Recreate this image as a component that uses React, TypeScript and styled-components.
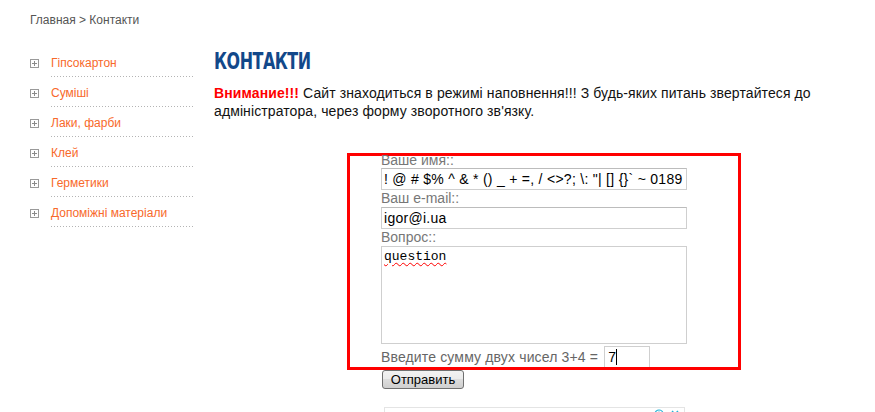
import styled, { createGlobalStyle } from "styled-components";

const GlobalStyle = createGlobalStyle`
  body {
    margin: 0;
    background: #fff;
    font-family: "Liberation Sans", Arial, sans-serif;
  }
`;

const Page = styled.div`
  padding: 13px 0 0 30px;
  width: 845px;
  height: 399px;
  overflow: hidden;
`;

const Breadcrumb = styled.div`
  font-size: 12px;
  line-height: 14px;
  color: #555;
  height: 31px;
`;

const Layout = styled.div`
  display: grid;
  grid-template-columns: 164px 640px;
  column-gap: 20px;
`;

const Sidebar = styled.ul`
  list-style: none;
  margin: 0;
  padding: 3px 0 0;
`;

const MenuItem = styled.li`
  display: flex;
  align-items: flex-start;
`;

const PlusIcon = styled.span`
  position: relative;
  flex: none;
  width: 7px;
  height: 7px;
  margin: 12px 12px 0 0;
  border: 1px solid #9a9a9a;

  &::before,
  &::after {
    content: "";
    position: absolute;
    background: #8a8a8a;
  }
  &::before {
    left: 1px;
    right: 1px;
    top: 3px;
    height: 1px;
  }
  &::after {
    top: 1px;
    bottom: 1px;
    left: 3px;
    width: 1px;
  }
`;

const MenuLink = styled.a`
  flex: 1;
  display: block;
  padding: 9px 0 7px;
  font-size: 12px;
  line-height: 14px;
  color: #f8692a;
  text-decoration: none;
  background: linear-gradient(to right, #b4b4b4 1px, transparent 1px) repeat-x left bottom / 3px 1px;
`;

const Main = styled.div`
  padding-top: 2px;
`;

// condensed heading: the original face is narrower than any installed one
const Heading = styled.h1`
  margin: 0;
  display: inline-block;
  font-family: "DejaVu Sans Condensed", "DejaVu Sans", sans-serif;
  font-size: 23px;
  line-height: 30px;
  font-weight: bold;
  color: #12488a;
  letter-spacing: -0.6px;
  transform: scaleX(0.77);
  transform-origin: left center;
`;

const Notice = styled.p`
  margin: 8px 0 0;
  font-size: 14px;
  line-height: 18px;
  letter-spacing: 0.1px;
  color: #111;

  strong {
    color: #f00;
  }
`;

const FormFrame = styled.form`
  margin: 33px 0 0 133px;
  width: 357px;
  height: 211px;
  padding: 0 0 0 31px;
  border: 3px solid #f00;
  display: flex;
  flex-direction: column;
`;

const Label = styled.label<{ $first?: boolean }>`
  display: block;
  font-size: 14px;
  line-height: ${({ $first }) => ($first ? "15px" : "17px")};
  margin-top: ${({ $first }) => ($first ? "-3px" : "0")};
  color: #777;
`;

const TextInput = styled.input`
  box-sizing: border-box;
  width: 306px;
  height: 22px;
  margin: 0;
  padding: 1px 2px;
  border: 1px solid #cfcfcf;
  border-top-color: #bcbcbc;
  font-family: "Liberation Sans", Arial, sans-serif;
  font-size: 14px;
  letter-spacing: 0.28px;
  color: #000;
  outline: none;
`;

const TextArea = styled.div`
  box-sizing: border-box;
  width: 306px;
  height: 98px;
  padding: 2px 2px;
  border: 1px solid #cfcfcf;
  font-family: "Liberation Mono", "Courier New", monospace;
  font-size: 13px;
  line-height: 15px;
  color: #000;

  span {
    text-decoration: underline wavy #f00;
    text-decoration-thickness: 1px;
    text-underline-offset: 2px;
  }
`;

const SumRow = styled.div`
  display: flex;
  align-items: flex-end;
  height: 23px;
  font-size: 14px;
  color: #666;
`;

const SumText = styled.span`
  line-height: 19px;
  margin-right: 6px;
  letter-spacing: 0.15px;
`;

const SumBox = styled.div`
  box-sizing: border-box;
  width: 46px;
  height: 21px;
  padding: 1px 3px;
  border: 1px solid #cfcfcf;
  border-bottom: none;
  font-size: 14px;
  line-height: 18px;
  color: #000;
  display: flex;
`;

const Caret = styled.span`
  width: 1px;
  height: 16px;
  margin-top: 1px;
  background: #000;
`;

const SubmitButton = styled.button`
  display: block;
  margin: 0 0 0 168px;
  width: 82px;
  height: 19px;
  padding: 0;
  font-family: "Liberation Sans", Arial, sans-serif;
  font-size: 13px;
  color: #000;
  border: 1px solid #707070;
  border-radius: 3px;
  background: linear-gradient(#f2f2f2, #ebebeb 50%, #dddddd 50%, #cfcfcf);
`;

const AdBox = styled.div`
  position: relative;
  margin: 18px 0 0 170px;
  width: 299px;
  height: 80px;
  border: 1px solid #e4e4e4;
`;

const AdIcons = styled.div`
  position: absolute;
  top: 1px;
  right: 4px;
  display: flex;
  gap: 6px;
  color: #27b3d6;
`;

const menu = ["Гіпсокартон", "Суміші", "Лаки, фарби", "Клей", "Герметики", "Допоміжні матеріали"];

export default function App() {
  return (
    <>
      <GlobalStyle />
      <Page>
        <Breadcrumb>Главная &gt; Контакти</Breadcrumb>
        <Layout>
          <Sidebar>
            {menu.map((item) => (
              <MenuItem key={item}>
                <PlusIcon />
                <MenuLink href="#">{item}</MenuLink>
              </MenuItem>
            ))}
          </Sidebar>
          <Main>
            <Heading>КОНТАКТИ</Heading>
            <Notice>
              <strong>Внимание!!!</strong> Сайт знаходиться в режимі наповнення!!! З будь-яких питань звертайтеся до
              адміністратора, через форму зворотного зв'язку.
            </Notice>
            <FormFrame onSubmit={(e) => e.preventDefault()}>
              <Label $first>Ваше имя::</Label>
              <TextInput defaultValue={'! @ # $% ^ & * () _ + =, / <>?; \\: "| [] {}` ~ 0189'} />
              <Label>Ваш e-mail::</Label>
              <TextInput defaultValue="igor@i.ua" />
              <Label>Вопрос::</Label>
              <TextArea>
                <span>question</span>
              </TextArea>
              <SumRow>
                <SumText>Введите сумму двух чисел 3+4 =</SumText>
                <SumBox>
                  7<Caret />
                </SumBox>
              </SumRow>
            </FormFrame>
            <SubmitButton type="submit">Отправить</SubmitButton>
            <AdBox>
              <AdIcons>
                <svg width="10" height="10" viewBox="0 0 10 10" fill="none" stroke="currentColor" strokeWidth="1.2">
                  <circle cx="5" cy="5" r="4" />
                  <path d="M5 4.5v3M5 2.6v0.8" />
                </svg>
                <svg width="10" height="10" viewBox="0 0 10 10" stroke="currentColor" strokeWidth="1.4">
                  <path d="M2 2l6 6M8 2l-6 6" />
                </svg>
              </AdIcons>
            </AdBox>
          </Main>
        </Layout>
      </Page>
    </>
  );
}
